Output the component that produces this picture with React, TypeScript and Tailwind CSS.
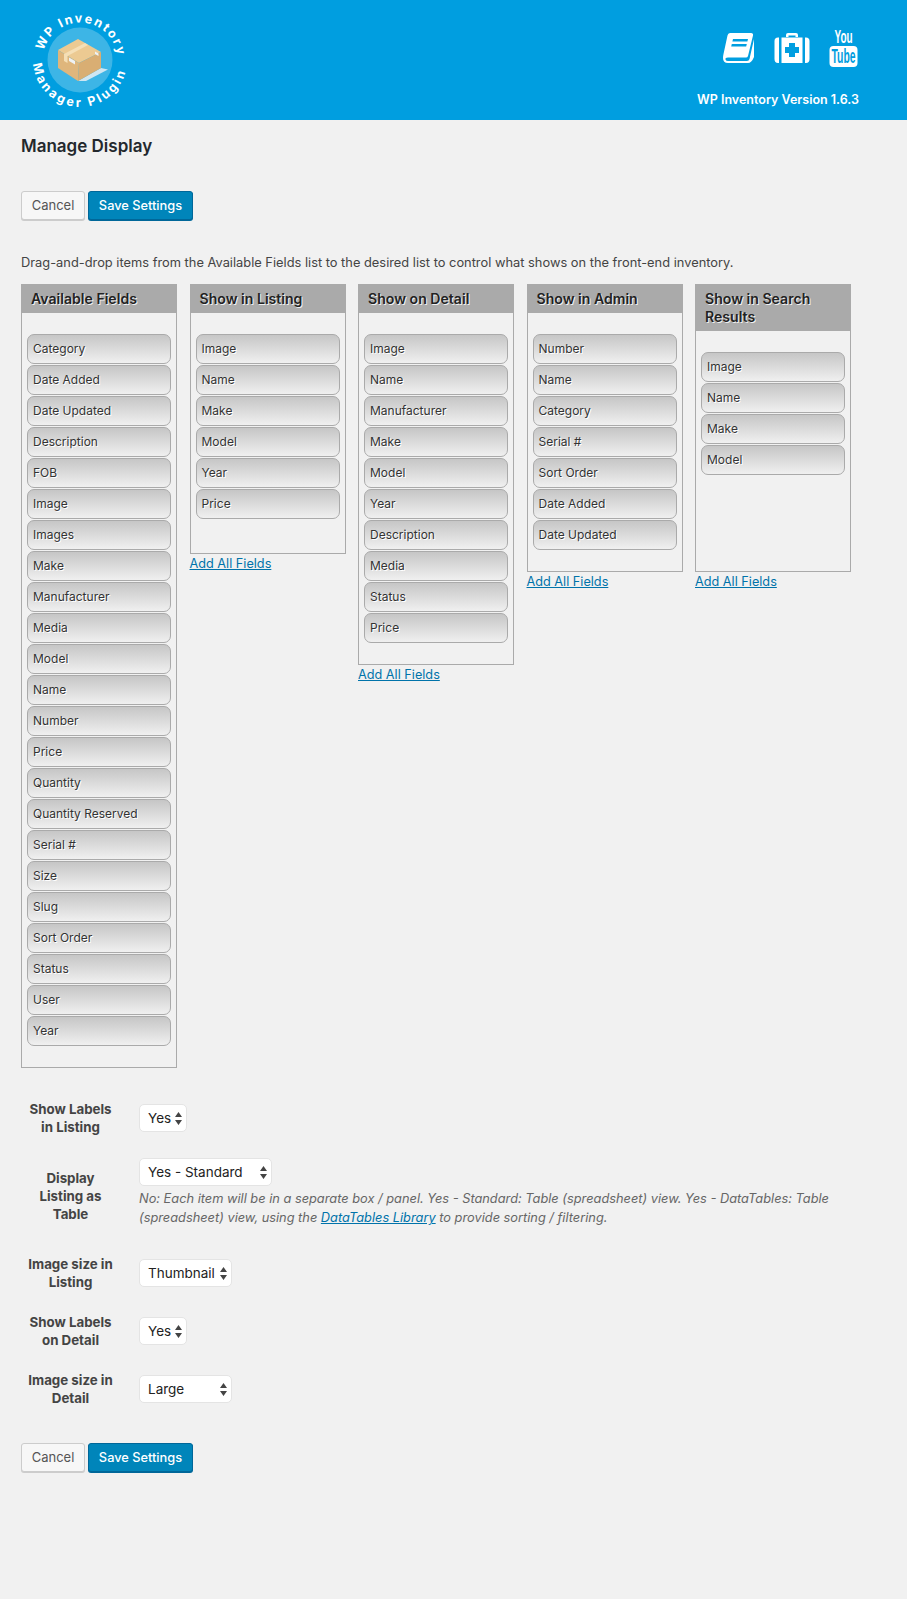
import React from "react";

const font = { fontFamily: "Inter" };

const columns: { title: string; fields: string[]; noAddAll?: boolean }[] = [
    {
        title: "Available Fields",
        noAddAll: true,
        fields: [
            "Category", "Date Added", "Date Updated", "Description", "FOB", "Image", "Images", "Make",
            "Manufacturer", "Media", "Model", "Name", "Number", "Price", "Quantity", "Quantity Reserved",
            "Serial #", "Size", "Slug", "Sort Order", "Status", "User", "Year",
        ],
    },
    { title: "Show in Listing", fields: ["Image", "Name", "Make", "Model", "Year", "Price"] },
    {
        title: "Show on Detail",
        fields: ["Image", "Name", "Manufacturer", "Make", "Model", "Year", "Description", "Media", "Status", "Price"],
    },
    {
        title: "Show in Admin",
        fields: ["Number", "Name", "Category", "Serial #", "Sort Order", "Date Added", "Date Updated"],
    },
    { title: "Show in Search Results", fields: ["Image", "Name", "Make", "Model"] },
];

const Logo = () => (
    <svg width="100" height="100" viewBox="0 0 100 100" className="ml-[30px] overflow-visible">
        <defs>
            <path id="logo-top" d="M 12.5 50 A 37.5 37.5 0 0 1 87.5 50" />
            <path id="logo-bottom" d="M 3 50 A 47 47 0 0 0 97 50" />
        </defs>
        <circle cx="50" cy="50" r="32.5" fill="#3db5e6" />
        <path d="M71 58 L78 59.5 L56 71 L48 71 Z" fill="#cfe6f2" />
        <path d="M48 29 L71 42 L49 53 L28 40 Z" fill="#ecca92" />
        <path d="M28 40 L49 53 L48 71 L28 58 Z" fill="#dfb67c" />
        <path d="M49 53 L71 42 L71 58 L48 71 Z" fill="#d9ae73" />
        <path d="M34 44 L55 33 L58 35 L37.5 46 V53 L34 51 Z" fill="#f5dfb6" />
        <path d="M39 47.5 L45 51 V54.5 L39 51 Z M65 41.5 L68.5 43.5 L68.5 46 L65 44 Z" fill="#eef2f5" />
        <text className="fill-white" fontFamily="Inter" fontWeight="700" fontSize="12.5" letterSpacing="1.9">
            <textPath href="#logo-top" startOffset="9">WP Inventory</textPath>
        </text>
        <text className="fill-white" fontFamily="Inter" fontWeight="700" fontSize="12.5" letterSpacing="2.7">
            <textPath href="#logo-bottom" startOffset="4">Manager Plugin</textPath>
        </text>
    </svg>
);

const BookIcon = () => (
    <svg width="33" height="32" viewBox="0 0 33 32" fill="none">
        <path
            d="M8 1 H29 Q31.5 1 31 3.5 L26 24 Q25.5 25.5 24 25.5 H6 Q3 25.5 3.5 27.5 Q4 29 6 29 H25 Q27 29 27.5 27 L32 7 V25 Q29.5 31 26 31 H6 Q1 31 1 26 Q1 24 1.5 22 L5.5 3.5 Q6 1 8 1 Z"
            fill="white"
        />
        <path d="M11 7 H26 L25.4 9.5 H10.4 Z M9.8 12 H24.8 L24.2 14.5 H9.2 Z" fill="#009ee0" />
    </svg>
);

const MedkitIcon = () => (
    <svg width="36" height="32" viewBox="0 0 36 32" fill="none">
        <path d="M12 5 V3 Q12 1 14 1 H22 Q24 1 24 3 V5 H21.5 V3.5 H14.5 V5 Z" fill="white" />
        <path d="M0.5 9 Q0.5 5.5 4 5.5 H5 V31 H4 Q0.5 31 0.5 27 Z M31 5.5 H32 Q35.5 5.5 35.5 9 V27 Q35.5 31 32 31 H31 Z" fill="white" />
        <path fillRule="evenodd" d="M7.5 5.5 H28.5 V31 H7.5 Z M15 11 V15 H11 V21 H15 V25 H21 V21 H25 V15 H21 V11 Z" fill="white" />
    </svg>
);

const YoutubeIcon = () => (
    <svg width="29" height="38" viewBox="0 0 29 38" className="overflow-visible">
        <text
            x="14.5"
            y="13.5"
            textAnchor="middle"
            fontFamily="Liberation Sans"
            fontWeight="700"
            fontSize="18"
            fill="white"
            textLength="18"
            lengthAdjust="spacingAndGlyphs"
        >
            You
        </text>
        <rect x="0.5" y="17" width="28" height="21" rx="4" fill="white" />
        <text
            x="14.5"
            y="34"
            textAnchor="middle"
            fontFamily="Liberation Sans"
            fontWeight="700"
            fontSize="20"
            fill="#009ee0"
            textLength="24"
            lengthAdjust="spacingAndGlyphs"
        >
            Tube
        </text>
    </svg>
);

const Buttons = () => (
    <div className="flex gap-[3px]">
        <button className="h-[29px] w-[64px] rounded-[3px] border border-[#cccccc] bg-[#f7f7f7] text-[13px] text-[#555555] shadow-[0_1px_0_#cccccc]">
            Cancel
        </button>
        <button className="h-[29px] w-[105px] rounded-[3px] border border-[#006799] bg-[#0085ba] text-[12.8px] font-medium text-white shadow-[0_1px_0_#006799]">
            Save Settings
        </button>
    </div>
);

const Column = ({ title, fields, noAddAll }: { title: string; fields: string[]; noAddAll?: boolean }) => (
    <div className="w-[156px]">
        <div className="border border-[#aaaaaa]">
            <h3 className="bg-[#aaaaaa] px-[9px] py-[5px] text-[14.1px] leading-[18px] font-semibold text-[#222222] [text-shadow:1px_1px_0_#f1f1f1]">
                {title}
            </h3>
            <ul className="flex min-h-[240px] flex-col gap-px px-[5px] pt-[21px] pb-[21px]">
                {fields.map((field, index) => (
                    <li
                        key={index}
                        className="flex h-[30px] items-center rounded-[7px] border border-[#aaaaaa] bg-gradient-to-b from-[#c6c6c6] to-[#f0f0f0] px-[5px] text-[12px] text-[#333333] [text-shadow:1px_1px_0_#ffffff]"
                    >
                        {field}
                    </li>
                ))}
            </ul>
        </div>
        {!noAddAll && (
            <a href="#" className="mt-[1px] block text-[12.7px] leading-[18px] text-[#0073aa] underline">
                Add All Fields
            </a>
        )}
    </div>
);

const Select = ({ value, width }: { value: string; width: string }) => (
    <div className={`relative h-[28px] rounded-[5px] border border-[#e4e4e4] bg-white text-[13.5px] leading-[26px] text-[#222222] ${width}`}>
        <span className="pl-[8px]">{value}</span>
        <svg width="7" height="13" viewBox="0 0 7 13" className="absolute top-[7px] right-[4px]" fill="#444444">
            <path d="M3.5 0 L7 5 H0 Z M0 8 H7 L3.5 13 Z" />
        </svg>
    </div>
);

const Setting = ({ label, children }: { label: React.ReactNode; children: React.ReactNode }) => (
    <div className="flex items-center py-[11px]">
        <div className="w-[99px] text-center text-[13.3px] leading-[18px] font-bold text-[#444444]">{label}</div>
        <div className="ml-[19px] flex-1">{children}</div>
    </div>
);

export default function App() {
    return (
        <div className="min-h-[1599px] bg-[#f1f1f1] text-[13px] text-[#444444]" style={font}>
            <header className="flex h-[120px] justify-between bg-[#009ee0]">
                <div className="pt-[10px]">
                    <Logo />
                </div>
                <div className="flex flex-col items-end pr-[48px]">
                    <div className="mt-[29px] mr-[1px] flex items-center gap-[19px]">
                        <BookIcon />
                        <MedkitIcon />
                        <YoutubeIcon />
                    </div>
                    <p className="mt-[24px] text-[12.5px] font-semibold text-white">WP Inventory Version 1.6.3</p>
                </div>
            </header>
            <main className="px-[21px]">
                <h1 className="mt-[15px] text-[17px] leading-[22px] font-semibold text-[#23282d]">Manage Display</h1>
                <div className="mt-[34px]">
                    <Buttons />
                </div>
                <p className="mt-[34px] text-[12.85px] leading-[18px] text-[#444444]">
                    Drag-and-drop items from the Available Fields list to the desired list to control what shows on the front-end inventory.
                </p>
                <div className="mt-[12px] flex items-start gap-[12.5px]">
                    {columns.map((column, index) => (
                        <Column key={index} title={column.title} fields={column.fields} noAddAll={column.noAddAll} />
                    ))}
                </div>
                <div className="mt-[21px]">
                    <Setting label={<>Show Labels<br />in Listing</>}>
                        <Select value="Yes" width="w-[48px]" />
                    </Setting>
                    <Setting label={<>Display<br />Listing as<br />Table</>}>
                        <Select value="Yes - Standard" width="w-[133px]" />
                        <p className="mt-[3px] mb-[6px] text-[12.8px] leading-[19px] text-[#666666] italic">
                            No: Each item will be in a separate box / panel. Yes - Standard: Table (spreadsheet) view. Yes - DataTables: Table
                            <br />
                            (spreadsheet) view, using the <a href="#" className="text-[#0073aa] underline">DataTables Library</a> to provide sorting / filtering.
                        </p>
                    </Setting>
                    <Setting label={<>Image size in<br />Listing</>}>
                        <Select value="Thumbnail" width="w-[93px]" />
                    </Setting>
                    <Setting label={<>Show Labels<br />on Detail</>}>
                        <Select value="Yes" width="w-[48px]" />
                    </Setting>
                    <Setting label={<>Image size in<br />Detail</>}>
                        <Select value="Large" width="w-[93px]" />
                    </Setting>
                </div>
                <div className="mt-[25px]">
                    <Buttons />
                </div>
            </main>
        </div>
    );
}
